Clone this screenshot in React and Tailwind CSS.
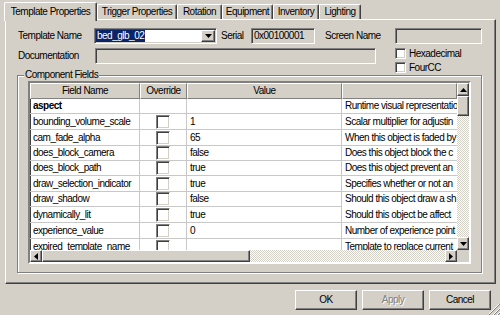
import React from "react";

const raised =
  "border border-t-white border-l-white border-b-[#404040] border-r-[#404040] shadow-[inset_-1px_-1px_0_#808080] bg-[#d4d0c8]";
const sunken =
  "border border-t-[#808080] border-l-[#808080] border-b-white border-r-white shadow-[inset_1px_1px_0_#404040,inset_-1px_-1px_0_#d4d0c8]";

function Down() {
  return (
    <svg width="7" height="4" viewBox="0 0 7 4">
      <polygon points="0,0 7,0 3.5,4" fill="#000" />
    </svg>
  );
}
function Up() {
  return (
    <svg width="7" height="4" viewBox="0 0 7 4">
      <polygon points="0,4 7,4 3.5,0" fill="#000" />
    </svg>
  );
}
function Left() {
  return (
    <svg width="4" height="7" viewBox="0 0 4 7">
      <polygon points="4,0 4,7 0,3.5" fill="#000" />
    </svg>
  );
}
function Right() {
  return (
    <svg width="4" height="7" viewBox="0 0 4 7">
      <polygon points="0,0 0,7 4,3.5" fill="#000" />
    </svg>
  );
}

const dither =
  "bg-[repeating-conic-gradient(#ffffff_0_25%,#d4d0c8_0_50%)] bg-[length:2px_2px]";

const rows = [
  { name: "aspect", bold: true, check: false, value: "", desc: "Runtime visual representatio", h: "h-[15px]" },
  { name: "bounding_volume_scale", check: true, value: "1", desc: "Scalar multiplier for adjustin", h: "h-[16px]" },
  { name: "cam_fade_alpha", check: true, value: "65", desc: "When this object is faded by", h: "h-[16px]" },
  { name: "does_block_camera", check: true, value: "false", desc: "Does this object block the c", h: "h-[15px]" },
  { name: "does_block_path", check: true, value: "true", desc: "Does this object prevent an", h: "h-[15px]" },
  { name: "draw_selection_indicator", check: true, value: "true", desc: "Specifies whether or not an", h: "h-[16px]" },
  { name: "draw_shadow", check: true, value: "false", desc: "Should this object draw a sh", noDescLine: true, h: "h-[15px]" },
  { name: "dynamically_lit", check: true, value: "true", desc: "Should this object be affect", h: "h-[16px]" },
  { name: "experience_value", check: true, value: "0", desc: "Number of experience point", h: "h-[16px]" },
  { name: "expired_template_name", check: true, value: "", desc: "Template to replace current", h: "h-[16px]" },
];

function Tab({ label, w }) {
  return (
    <div
      className={`h-[15px] ${w} border-t border-l border-t-white border-l-white border-r border-r-[#404040] shadow-[inset_-1px_0_0_#808080] flex items-center justify-center rounded-tl-[2px] rounded-tr-[2px] whitespace-nowrap`}
    >
      {label}
    </div>
  );
}

export default function App() {
  return (
    <div className="w-[500px] h-[315px] bg-[#d4d0c8] relative overflow-hidden text-black font-[family-name:'Liberation_Sans',Arial,sans-serif] text-[10px] tracking-[-0.5px] leading-[12px]">
      {/* Tabs */}
      <div className="flex items-end h-[19px] pl-[4px]">
        <div className="relative z-10 -mb-[2px] h-[19px] w-[93px] bg-[#d4d0c8] border-t border-l border-t-white border-l-white border-r border-r-[#404040] shadow-[inset_-1px_0_0_#808080] flex items-start justify-center pt-[3px] rounded-tl-[2px] rounded-tr-[2px] whitespace-nowrap">
          Template Properties
        </div>
        <Tab label="Trigger Properties" w="w-[80px]" />
        <Tab label="Rotation" w="w-[45px]" />
        <Tab label="Equipment" w="w-[51px]" />
        <Tab label="Inventory" w="w-[46px]" />
        <Tab label="Lighting" w="w-[42px]" />
      </div>

      {/* Panel */}
      <div className="ml-[5px] w-[491px] h-[265px] border border-t-white border-l-white border-b-[#404040] border-r-[#404040] shadow-[inset_-1px_-1px_0_#808080] pt-[8px] pl-[12px]">
        {/* Row 1 */}
        <div className="flex items-center h-[16px]">
          <div className="w-[76px] whitespace-nowrap">Template Name</div>
          <div className={`w-[123px] h-[16px] bg-white flex items-center pl-[1px] pr-[1px] ${sunken}`}>
            <span className="bg-[#0a246a] text-white h-[12px] pl-[1px] pr-[1px] leading-[12px]">bed_glb_02</span>
            <div className={`ml-auto w-[14px] h-[12px] flex items-center justify-center ${raised}`}>
              <Down />
            </div>
          </div>
          <div className="ml-[4px] w-[30px]">Serial</div>
          <div className={`w-[64px] h-[16px] flex items-center pl-[2px] ${sunken}`}>0x00100001</div>
          <div className="ml-[10px] w-[70px] whitespace-nowrap">Screen Name</div>
          <div className={`w-[87px] h-[16px] ${sunken}`} />
        </div>

        {/* Row 2 */}
        <div className="flex items-start mt-[4px]">
          <div className="w-[77px] h-[16px] flex items-center">Documentation</div>
          <div className={`w-[281px] h-[16px] ${sunken}`} />
          <div className="ml-[19px] -mt-[1px] flex flex-col gap-[1px]">
            <div className="flex items-center h-[13px]">
              <div className={`w-[11px] h-[11px] bg-white ${sunken}`} />
              <span className="ml-[3px]">Hexadecimal</span>
            </div>
            <div className="flex items-center h-[13px]">
              <div className={`w-[11px] h-[11px] bg-white ${sunken}`} />
              <span className="ml-[3px]">FourCC</span>
            </div>
          </div>
        </div>

        {/* Group box */}
        <div className="relative -ml-[1px] mt-[1px] w-[465px] h-[198px] border border-[#808080] shadow-[1px_1px_0_#ffffff,inset_1px_1px_0_#ffffff] pt-[5px] pl-[10px]">
          <span className="absolute left-[6px] -top-[7px] px-[1px] bg-[#d4d0c8] whitespace-nowrap">Component Fields</span>

          {/* Grid */}
          <div className="w-[443px] h-[183px] bg-white border-2 border-t-[#808080] border-l-[#808080] border-b-white border-r-white shadow-[inset_1px_1px_0_#404040,inset_-1px_-1px_0_#d4d0c8]">
            <div className="flex h-[167px]">
              <div className="w-[427px] overflow-hidden">
                {/* Header */}
                <div className="flex h-[16px]">
                  <div className="w-[110px] h-[16px] border border-t-white border-l-white border-r-[#808080] border-b-[#808080] bg-[#d4d0c8] flex items-center justify-center">Field Name</div>
                  <div className="w-[47px] h-[16px] border border-t-white border-l-white border-r-[#808080] border-b-[#808080] bg-[#d4d0c8] flex items-center justify-center">Override</div>
                  <div className="w-[155px] h-[16px] border border-t-white border-l-white border-r-[#808080] border-b-[#808080] bg-[#d4d0c8] flex items-center justify-center">Value</div>
                  <div className="w-[115px] h-[16px] border border-t-white border-l-white border-r-[#808080] border-b-[#808080] bg-[#d4d0c8]" />
                </div>
                {rows.map((r) => (
                  <div key={r.name} className={`flex ${r.h}`}>
                    <div className={`w-[110px] h-full border-r border-b border-[#c8c8c8] pl-[3px] flex items-center whitespace-nowrap overflow-hidden ${r.bold ? "font-bold" : ""}`}>
                      {r.name}
                    </div>
                    <div className="w-[47px] h-full border-r border-b border-[#c8c8c8] flex items-center justify-center">
                      {r.check && <div className={`w-[14px] h-[14px] bg-white ${sunken}`} />}
                    </div>
                    <div className="w-[155px] h-full border-r border-b border-[#c8c8c8] pl-[3px] flex items-center whitespace-nowrap overflow-hidden">
                      {r.value}
                    </div>
                    <div className={`w-[115px] h-full ${r.noDescLine ? "border-b border-b-white" : "border-b border-[#c8c8c8]"} pl-[3px] flex items-center whitespace-nowrap overflow-hidden`}>
                      {r.desc}
                    </div>
                  </div>
                ))}
              </div>
              {/* Vertical scrollbar */}
              <div className={`w-[12px] h-[167px] flex flex-col ${dither}`}>
                <div className={`h-[13px] flex items-center justify-center ${raised}`}>
                  <Up />
                </div>
                <div className={`h-[20px] ${raised}`} />
                <div className="flex-1" />
                <div className={`h-[13px] flex items-center justify-center ${raised}`}>
                  <Down />
                </div>
              </div>
            </div>
            <div className="flex h-[12px]">
              <div className={`w-[427px] h-[12px] flex ${dither}`}>
                <div className={`w-[12px] h-[12px] flex items-center justify-center ${raised}`}>
                  <Left />
                </div>
                <div className={`w-[208px] h-[12px] ${raised}`} />
                <div className="flex-1" />
                <div className={`w-[12px] h-[12px] flex items-center justify-center ${raised}`}>
                  <Right />
                </div>
              </div>
              <div className="w-[12px] h-[12px] bg-[#d4d0c8]" />
            </div>
          </div>
        </div>
      </div>

      {/* Buttons */}
      <div className="flex justify-end gap-[5px] pr-[9px] mt-[6px]">
        <div className={`w-[62px] h-[20px] flex items-center justify-center ${raised}`}>OK</div>
        <div className={`w-[62px] h-[20px] flex items-center justify-center text-[#808080] [text-shadow:1px_1px_0_#ffffff] ${raised}`}>Apply</div>
        <div className={`w-[62px] h-[20px] flex items-center justify-center ${raised}`}>Cancel</div>
      </div>

      {/* Size grip */}
      <svg className="absolute right-0 bottom-0" width="12" height="12" viewBox="0 0 12 12">
        <line x1="11" y1="1" x2="1" y2="11" stroke="#ffffff" />
        <line x1="12" y1="1" x2="1" y2="12" stroke="#808080" />
        <line x1="12" y1="5" x2="5" y2="12" stroke="#ffffff" />
        <line x1="12" y1="6" x2="6" y2="12" stroke="#808080" />
        <line x1="12" y1="9" x2="9" y2="12" stroke="#ffffff" />
        <line x1="12" y1="10" x2="10" y2="12" stroke="#808080" />
      </svg>
    </div>
  );
}
